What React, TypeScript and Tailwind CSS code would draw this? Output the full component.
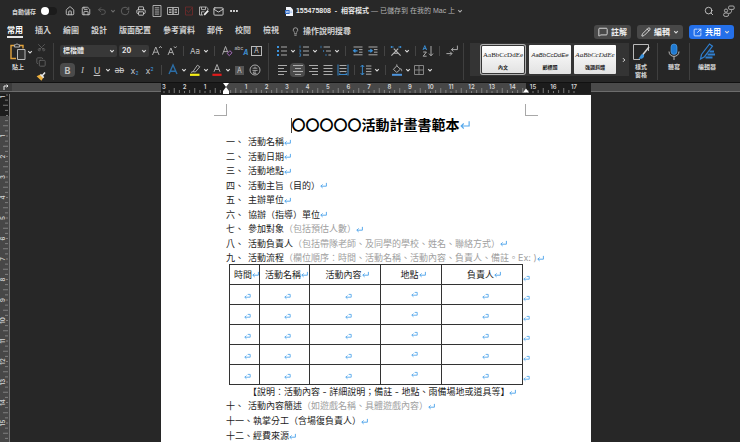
import React from 'react';
import clsx from 'clsx';
import {
  Copy,
  Ellipsis,
  Home,
  Lightbulb,
  Mail,
  MessageSquare,
  Pencil,
  Printer,
  RotateCw,
  Save,
  Scissors,
  Search,
  SquareArrowOutUpRight,
  Undo2,
} from 'lucide-react';

const UNIT = 20.5;

const tabs = ['常用', '插入', '繪圖', '設計', '版面配置', '參考資料', '郵件', '校閱', '檢視'];

interface OutlineItem {
  no: string;
  text: string;
  hint?: string;
}

const outlineTop: OutlineItem[] = [
  { no: '一、', text: '活動名稱' },
  { no: '二、', text: '活動日期' },
  { no: '三、', text: '活動地點' },
  { no: '四、', text: '活動主旨（目的）' },
  { no: '五、', text: '主辦單位' },
  { no: '六、', text: '協辦（指導）單位' },
  { no: '七、', text: '參加對象', hint: '（包括預估人數）' },
  { no: '八、', text: '活動負責人', hint: '（包括帶隊老師、及同學的學校、姓名、聯絡方式）' },
  { no: '九、', text: '活動流程', hint: '（欄位順序：時間、活動名稱、活動內容、負責人、備註。Ex: )' },
];

const outlineBottom: OutlineItem[] = [
  { no: '十、', text: '活動內容簡述', hint: '（如遊戲名稱、具體遊戲內容）' },
  { no: '十一、', text: '執掌分工（含場復負責人）' },
  { no: '十二、', text: '經費來源' },
];

const columns = [
  { label: '時間', width: 'w-[28px]' },
  { label: '活動名稱', width: 'w-[50px]' },
  { label: '活動內容', width: 'w-[71px]' },
  { label: '地點', width: 'w-[61px]' },
  { label: '負責人', width: 'w-[81px]' },
];

const styles = [
  {
    name: '內文',
    card: 'mx-[2px] h-[27px] w-[42px] pt-[5px] pb-[2px] ring-1 ring-[#b0b0b0] ring-offset-1 ring-offset-[#343434]',
    sample: "font-['Liberation_Serif',serif] text-[7px]",
  },
  {
    name: '副標題',
    card: 'h-[29px] w-[42px] pt-[6px] pb-[3px]',
    sample: "font-['Liberation_Sans',sans-serif] text-[6px] italic",
  },
  {
    name: '強調斜體',
    card: 'h-[29px] w-[42px] pt-[6px] pb-[3px]',
    sample: "font-['Liberation_Serif',serif] text-[7px] italic",
  },
];

/* ---------- small parts ---------- */

const Chevron = ({ className = 'text-[#d8d8d8]' }: { className?: string }) => (
  <svg viewBox="0 0 6 6" className={clsx('h-[6px] w-[6px] shrink-0', className)} aria-hidden="true">
    <path d="M1.2 2.2 3 4l1.8-1.8" fill="none" stroke="currentColor" strokeWidth="1.1" />
  </svg>
);

const Glyph = ({ children }: { children: React.ReactNode }) => (
  <svg
    viewBox="0 0 14 14"
    className="h-[14px] w-[14px] shrink-0"
    fill="none"
    stroke="#b9b9b9"
    strokeWidth="0.9"
    aria-hidden="true"
  >
    {children}
  </svg>
);

interface ToolProps {
  label: string;
  children: React.ReactNode;
  split?: boolean;
  active?: boolean;
  className?: string;
}

const Tool: React.FC<ToolProps> = ({ label, children, split, active, className }) => (
  <button
    type="button"
    aria-label={label}
    className={clsx(
      'flex h-[14px] shrink-0 items-center justify-center',
      split ? 'w-[22px]' : 'w-[15px]',
      active && 'rounded-sm bg-[#4b4b4b]',
      className,
    )}
  >
    <span className="flex w-[14px] shrink-0 justify-center">{children}</span>
    {split && (
      <span className="flex w-[8px] justify-center">
        <Chevron />
      </span>
    )}
  </button>
);

const Sep = () => <span className="mx-1 h-[10px] w-px shrink-0 bg-[#444444]" />;

const GroupSep = ({ className }: { className: string }) => (
  <span className={clsx('h-[37px] w-px shrink-0 self-start bg-[#3f3f3f]', className)} />
);

const Mark = ({ big }: { big?: boolean }) => (
  <svg
    viewBox="0 0 8 8"
    className={clsx('inline-block shrink-0', big ? 'h-[10px] w-[10px]' : 'h-[7px] w-[7px]')}
    fill="none"
    stroke="#55a8ec"
    strokeWidth={big ? 0.9 : 1.1}
    aria-hidden="true"
  >
    <path d="M7.3 1v3.8H1M3 2.8l-2.1 2 2.1 2" />
  </svg>
);

const CellMark = () => (
  <svg
    viewBox="0 0 8 8"
    className="inline-block h-[7px] w-[7px] shrink-0"
    fill="none"
    stroke="#55a8ec"
    strokeWidth="1"
    aria-hidden="true"
  >
    <path d="M4.2 1.6h2.9v3.2H1M2.8 3 .9 4.8l1.9 1.8" />
  </svg>
);

/* ---------- title bar ---------- */

const TitleBar = () => (
  <header className="flex h-[22px] items-center bg-[#282828] text-[#d4d4d4]">
    <div className="flex flex-1 items-center pl-3">
      <label className="flex items-center gap-[5px] text-[6px] font-bold whitespace-nowrap">
        自動儲存
        <input type="checkbox" role="switch" className="peer sr-only" />
        <span className="flex h-[8px] w-[16px] items-center rounded-full bg-[#1b1b1b] peer-checked:justify-end">
          <span className="h-[8px] w-[8px] rounded-full bg-white" />
        </span>
      </label>
      <div className="ml-[5px] flex items-center">
        <Tool label="首頁" className="w-[16px]"><Home size={10} strokeWidth={2} /></Tool>
        <Tool label="儲存" className="w-[16px]"><Save size={10} strokeWidth={2} /></Tool>
        <Tool label="復原" className="w-[14px] text-[#636363]"><Undo2 size={10} strokeWidth={2} /></Tool>
        <span className="flex w-[8px] justify-center"><Chevron className="text-[#6b6b6b]" /></span>
        <Tool label="重複" className="w-[16px] text-[#6a6a6a]"><RotateCw size={10} strokeWidth={2} /></Tool>
        <Tool label="列印" className="w-[16px]"><Printer size={10} strokeWidth={2} /></Tool>
        <Tool label="整頁模式" className="w-[16px]">
          <Glyph>
            <path d="M3 1.5h8v11H3z" />
            <path d="M4.8 3.8h4.4M4.8 5.9h4.4M4.8 8h4.4M4.8 10.1h4.4" />
          </Glyph>
        </Tool>
        <Tool label="閱讀模式" className="w-[16px]">
          <Glyph>
            <path d="M1.5 3.5h5.5v7H1.5zM7 3.5h5.5v7H7zM3 5.5h2.5M3 7h2.5M3 8.5h2.5M8.5 5.5H11M8.5 7H11M8.5 8.5H11" />
          </Glyph>
        </Tool>
        <Tool label="關閉檔案">
          <Glyph>
            <path d="M3.5 3h7v8h-7zM4.5 6l2 2.5L10 4" stroke="#6b2a2a" />
          </Glyph>
        </Tool>
        <Tool label="另存新檔">
          <Glyph>
            <path d="M6 11H2.5V3h6.8L11 4.6V6M4.5 3v2.6h4V3M4.5 11V7.8h3" />
            <path d="m7.2 10.8 4-4.2" stroke="#f0f0f0" strokeWidth="1.8" />
          </Glyph>
        </Tool>
        <Tool label="郵寄"><Mail size={11} strokeWidth={2} /></Tool>
        <Tool label="更多" className="text-white"><Ellipsis size={10} strokeWidth={3} /></Tool>
      </div>
    </div>

    <button
      type="button"
      className="flex items-center gap-[2px] font-['Liberation_Sans','Noto_Sans_CJK_TC',sans-serif] text-[7px] leading-[10px] whitespace-nowrap"
    >
      <svg viewBox="0 0 8 9" className="h-[9px] w-[8px]" aria-hidden="true">
        <path d="M1 0h4.6L8 2.4V9H1z" fill="#f3f6fb" />
        <path d="M0 3h4.6v4H0z" fill="#2b67c4" />
        <path d="m.9 4 .6 2 .7-2 .8 2 .6-2" fill="none" stroke="#fff" strokeWidth=".5" />
        <path d="M5.2 4.2h2M5.2 5.6h2" stroke="#7da5e2" strokeWidth=".6" />
      </svg>
      <span className="pl-px font-bold text-[#e8e8e8]">155475808&nbsp; -&nbsp; 相容模式</span>
      <span className="text-[#b4b4b4]">— 已儲存到 在我的 Mac 上</span>
      <Chevron className="text-[#a8a8a8]" />
    </button>

    <div className="flex flex-1 items-center justify-end gap-[5px] pr-1">
      <Tool label="搜尋"><Search size={10} strokeWidth={2} /></Tool>
      <Tool label="共同作業">
        <Glyph>
          <circle cx="4" cy="6.6" r="1.6" />
          <rect x="1.6" y="9" width="5" height="3.4" rx="1.6" />
          <rect x="6.6" y="2" width="5.6" height="3.4" rx="1.2" />
          <path d="M6.6 9.4c2.4 0 3-1 3-3.2" />
        </Glyph>
      </Tool>
    </div>
  </header>
);

/* ---------- tabs ---------- */

const TabRow = () => (
  <nav className="flex h-[18px] items-center justify-between bg-[#282828] pr-[6px] pl-[7px] text-[8px] leading-[10px] font-bold text-[#d0d0d0]">
    <div className="flex gap-3 whitespace-nowrap">
      {tabs.map((tab, i) => (
        <button
          key={tab}
          type="button"
          className={clsx('border-b-2 py-px', i === 0 ? 'border-[#e6e6e6] text-white' : 'border-transparent')}
        >
          {tab}
        </button>
      ))}
      <button type="button" className="flex items-center gap-[3px]">
        <Lightbulb size={9} strokeWidth={1.8} />
        操作說明搜尋
      </button>
    </div>
    <div className="flex gap-[6px] pt-[2px] whitespace-nowrap text-[#f0f0f0]">
      <button type="button" className="flex h-[14px] items-center gap-[3px] rounded-[3px] bg-[#484848] px-1">
        <MessageSquare size={10} strokeWidth={2} />
        註解
      </button>
      <button type="button" className="flex h-[14px] items-center gap-[3px] rounded-[3px] bg-[#484848] px-1">
        <Pencil size={10} strokeWidth={2} />
        編輯
        <Chevron />
      </button>
      <button type="button" className="flex h-[14px] items-center gap-[3px] rounded-[3px] bg-[#2470ea] px-1 text-white">
        <SquareArrowOutUpRight size={9} strokeWidth={2} />
        共用
        <Chevron />
      </button>
    </div>
  </nav>
);

/* ---------- ribbon ---------- */

const Lines = ({ x, w }: { x: number[]; w: number[] }) => (
  <Glyph>
    {x.map((left, i) => (
      <path key={i} d={`M${left} ${2.5 + i * 3}h${w[i]}`} />
    ))}
  </Glyph>
);

const FontGroup = () => (
  <div className="flex shrink-0 flex-col gap-[5px] text-[#c4c4c4]">
    <div className="flex items-center">
      <span className="relative mr-[2px] flex w-[57px] items-center">
        <select
          aria-label="字型"
          className="h-[12px] w-full appearance-none rounded-[2px] bg-[#383838] pl-[3px] text-[7px] leading-[10px] font-bold text-[#e4e4e4]"
        >
          <option>標楷體</option>
        </select>
        <span className="pointer-events-none absolute right-[2px]"><Chevron /></span>
      </span>
      <span className="relative flex w-[30px] items-center">
        <select
          aria-label="字型大小"
          className="h-[12px] w-full appearance-none rounded-[2px] bg-[#383838] pl-[3px] text-[7px] leading-[10px] font-bold text-[#e4e4e4]"
        >
          <option>20</option>
        </select>
        <span className="pointer-events-none absolute right-[2px]"><Chevron /></span>
      </span>
      <Tool label="放大字型">
        <Glyph><path d="m2.5 11 3.3-8 3.3 8M3.7 8.2h4.2M9 4l1.4-1.6L11.8 4" /></Glyph>
      </Tool>
      <Tool label="縮小字型">
        <Glyph><path d="m3 11 2.9-7 2.9 7M4 8.6h3.8M9 2.4 10.3 4l1.3-1.6" /></Glyph>
      </Tool>
      <Sep />
      <Tool label="變更大小寫" split><span className="text-[8px] leading-[10px]">Aa</span></Tool>
      <Sep />
      <Tool label="清除格式">
        <Glyph>
          <path d="m2.5 10.5 3-8 2.2 5.6M3.5 7.6h3.8" />
          <path d="m7.2 9.5 2.6-2.8 2.2 2-2.7 2.9z" stroke="#b673cf" />
        </Glyph>
      </Tool>
      <Tool label="注音標示">
        <span className="flex h-[11px] justify-between">
          <span className="text-[5px] leading-[5px]">abc</span>
          <span className="self-end text-[7px] leading-[8px] font-bold text-[#3f8ccc] italic">A</span>
        </span>
      </Tool>
      <Tool label="字元框線">
        <span className="border border-[#b9b9b9] px-[2px] text-[7px] leading-[8px]">A</span>
      </Tool>
    </div>
    <div className="flex items-center text-[9px] leading-[11px]">
      <Tool label="粗體" active className="w-[14px]"><b>B</b></Tool>
      <Tool label="斜體"><i className="font-['Liberation_Serif',serif]">I</i></Tool>
      <Tool label="底線" split><span className="underline">U</span></Tool>
      <Tool label="刪除線"><span className="text-[8px] line-through">ab</span></Tool>
      <Tool label="下標">
        <span>x<sub className="text-[5px] text-[#3f9be0]">2</sub></span>
      </Tool>
      <Tool label="上標">
        <span>x<sup className="text-[5px] text-[#3f9be0]">2</sup></span>
      </Tool>
      <Sep />
      <Tool label="文字效果" split>
        <Glyph><path d="m3 11 4-9 4 9M4.6 8.2h4.8" stroke="#2c6da5" strokeWidth="1.4" /></Glyph>
      </Tool>
      <Tool label="醒目提示" split>
        <Glyph>
          <path d="m5 8.6 4.4-6.4 2.4 1.6L7.4 9zM5 8.6 3 9.4" />
          <path d="M2 11.8h9.5" stroke="#f5ee17" strokeWidth="2.2" />
        </Glyph>
      </Tool>
      <Tool label="字型色彩" split>
        <Glyph>
          <path d="m4 8.8 3-7.3 3 7.3M5 6.4h4" />
          <path d="M2.4 11.8h9.2" stroke="#e01b1b" strokeWidth="2.2" />
        </Glyph>
      </Tool>
      <Tool label="字元網底"><span className="bg-[#555555] px-[2px] text-[7px] leading-[9px]">A</span></Tool>
      <Tool label="圍繞字元">
        <Glyph>
          <circle cx="7" cy="7" r="5" />
          <path d="M4.6 5.2h4.8M7 3.6v1.6M4.4 7.4h5.2M7 7.4v3M5.4 8.6v1.8h3" strokeWidth="0.8" />
        </Glyph>
      </Tool>
    </div>
  </div>
);

const ParagraphGroup = () => (
  <div className="flex shrink-0 flex-col gap-[5px]">
    <div className="flex items-center">
      <Tool label="項目符號" split>
        <Glyph>
          <path d="M6 3h6M6 7h6M6 11h6" />
          <path d="M2 3h2M2 7h2M2 11h2" stroke="#3b93dd" strokeWidth="2" />
        </Glyph>
      </Tool>
      <Tool label="編號" split>
        <Glyph>
          <path d="M6 3h6M6 7h6M6 11h6" />
          <path d="M3 1.6v2.6M2.2 6h1.4v2H2.2M2.2 9.8h1.4v2.4H2.2" stroke="#3479b3" />
        </Glyph>
      </Tool>
      <Tool label="多層次清單" split>
        <Glyph>
          <path d="M4.6 3H11M7 7h5M9.4 11H12" />
          <path d="M2 1.8v2.4M4.6 6v2M7 10v2" stroke="#3479b3" />
        </Glyph>
      </Tool>
      <Sep />
      <Tool label="減少縮排">
        <Glyph>
          <path d="M2.5 3h9M8 5.6h3.5M8 8.2h3.5M2.5 10.8h9" />
          <path d="M6.5 6.8h-4M4.4 5.2 2.6 6.8l1.8 1.6" stroke="#3b93dd" strokeWidth="1.2" />
        </Glyph>
      </Tool>
      <Tool label="增加縮排">
        <Glyph>
          <path d="M2.5 3h9M8 5.6h3.5M8 8.2h3.5M2.5 10.8h9" />
          <path d="M2.2 6.8h4M4.4 5.2l1.8 1.6-1.8 1.6" stroke="#3b93dd" strokeWidth="1.2" />
        </Glyph>
      </Tool>
      <Sep />
      <Tool label="亞洲方式配置" split>
        <Glyph>
          <path d="m2.4 11.6 6.8-7M11.6 11.6l-6.8-7M4.6 9.2h4.8" strokeWidth="1.1" />
          <path d="M1.6 3h3M9.4 3h3M2.6 2v2M11.4 2v2" stroke="#3b93dd" />
        </Glyph>
      </Tool>
      <Sep />
      <Tool label="排序">
        <Glyph>
          <path d="m2 6 1.8-4.4L5.6 6M2.6 4.6H5" stroke="#3b93dd" />
          <path d="M2.2 8h3.2l-3.2 4.2h3.4M10 2v9.6M8 9.6l2 2.2 2-2.2" />
        </Glyph>
      </Tool>
      <Sep />
      <Tool label="顯示編輯標記">
        <Glyph><path d="M12.4 1.6v4H6.6M8.4 3.8 6.4 5.6l2 1.8M1.4 9.6h5.4M5 7.6l2 2-2 2" /></Glyph>
      </Tool>
    </div>
    <div className="flex items-center">
      <Tool label="靠左對齊"><Lines x={[2, 2, 2, 2]} w={[9, 6, 9, 6]} /></Tool>
      <Tool label="置中" active><Lines x={[2, 4, 2, 4]} w={[10, 6, 10, 6]} /></Tool>
      <Tool label="靠右對齊"><Lines x={[3, 6, 3, 6]} w={[9, 6, 9, 6]} /></Tool>
      <Tool label="左右對齊"><Lines x={[2.5, 2.5, 2.5, 2.5]} w={[9, 9, 9, 9]} /></Tool>
      <Tool label="分散對齊">
        <Glyph>
          <path d="M3.5 2.5h7M3.5 5.5h7M3.5 8.5h7" />
          <path d="M2 1.5v11M12 1.5v11M3 11.5h8M4.4 10l-1.6 1.5M9.6 10l1.6 1.5" stroke="#3b93dd" />
        </Glyph>
      </Tool>
      <Sep />
      <Tool label="行距" split>
        <Glyph>
          <path d="M7 3h5.4M7 5.8h5.4M7 8.6h5.4M7 11.2h5.4" />
          <path d="M3.4 2.2v9.6M1.6 4l1.8-2 1.8 2M1.6 10l1.8 2 1.8-2" stroke="#3b93dd" />
        </Glyph>
      </Tool>
      <Sep />
      <Tool label="網底" split>
        <Glyph>
          <path d="m3.4 6.4 3.4-3.6 3.6 3.4-3.6 3.2zM6.8 2.8V1.4M10.6 5.4c1 .9 1.2 1.8 1 2.8" />
          <path d="M2 11.8h10" stroke="#4d94dc" strokeWidth="2" />
        </Glyph>
      </Tool>
      <Tool label="框線" split>
        <Glyph><path d="M2.5 2.5h9v9h-9zM7 2.5v9M2.5 7h9" stroke="#8e8e8e" /></Glyph>
      </Tool>
    </div>
  </div>
);

const StyleGallery = () => (
  <div className="flex h-[33px] shrink-0 items-center gap-[3px] self-start bg-[#343434] pl-[10px]">
    {styles.map((style) => (
      <button
        key={style.name}
        type="button"
        className={clsx(
          'flex flex-col items-center justify-between rounded-[1px] bg-gradient-to-b from-white to-[#e2e2e2] text-[#222222]',
          style.card,
        )}
      >
        <span className={clsx('leading-[9px] whitespace-nowrap', style.sample)}>AaBbCcDdEe</span>
        <span className="text-[5px] leading-[7px] font-bold whitespace-nowrap">{style.name}</span>
      </button>
    ))}
    <button type="button" aria-label="更多樣式" className="flex w-[10px] justify-center">
      <svg viewBox="0 0 6 6" className="h-[6px] w-[6px]" aria-hidden="true">
        <path d="M2 1.2 3.8 3 2 4.8" fill="none" stroke="#e4e4e4" strokeWidth="1" />
      </svg>
    </button>
  </div>
);

interface LargeToolProps {
  label: React.ReactNode;
  children: React.ReactNode;
}

const LargeTool: React.FC<LargeToolProps> = ({ label, children }) => (
  <button
    type="button"
    className="flex w-6 shrink-0 flex-col items-center gap-[2px] self-start text-[6px] leading-[8px] font-bold whitespace-nowrap text-[#d8d8d8]"
  >
    <svg viewBox="0 0 18 18" className="h-[18px] w-[18px]" fill="none" stroke="#b9b9b9" aria-hidden="true">
      {children}
    </svg>
    <span>{label}</span>
  </button>
);

const Ribbon = () => (
  <section className="flex h-[42px] items-start overflow-hidden bg-[#262626] pt-[3px] pl-[6px]">
    <LargeTool label="貼上">
      <path d="M5 2.5H2v13h5M11 2.5h3v3" stroke="#e3a33c" strokeWidth="1.4" />
      <path d="M5.4 4V1.8h1.4C7 .6 9 .6 9.2 1.8h1.4V4z" />
      <path d="M8.5 6.5H16v10H8.5z" fill="#333" />
    </LargeTool>
    <span className="-ml-1 flex h-[18px] w-2 items-center justify-center"><Chevron /></span>
    <div className="flex w-[14px] shrink-0 flex-col items-center justify-between self-stretch pb-px text-[#666666]">
      <button type="button" aria-label="剪下"><Scissors size={9} strokeWidth={2} className="-rotate-90" /></button>
      <button type="button" aria-label="複製"><Copy size={10} strokeWidth={2} /></button>
      <button type="button" aria-label="複製格式" className="flex">
        <svg viewBox="0 0 10 10" className="h-[10px] w-[10px]" aria-hidden="true">
          <path d="m.6 5.2 3.6-1.6 3.2 3-2 3.2z" fill="#eeb13f" />
          <path d="m4.4 3.4 3.4 3.2M6.2 4.8 9 1.4" fill="none" stroke="#e6e6e6" strokeWidth="1.5" />
        </svg>
      </button>
    </div>
    <GroupSep className="mr-[6px] ml-[5px]" />
    <div className="pt-px"><FontGroup /></div>
    <GroupSep className="mr-[6px] ml-1" />
    <div className="pt-px"><ParagraphGroup /></div>
    <GroupSep className="mr-[6px] ml-1" />
    <StyleGallery />
    <LargeTool label={<>樣式<br />窗格</>}>
      <path d="M16.5 8V1.5h-15v15H8" />
      <path d="m17 4-6.5 8" stroke="#d5d5d5" strokeWidth="1.6" />
      <path d="M10.6 11c-2 .2-2.2 3-4.2 4.6 3 .9 5.8-.6 5.8-3.2z" fill="#3b93dd" stroke="none" />
    </LargeTool>
    <GroupSep className="mx-1" />
    <LargeTool label="聽寫">
      <rect x="6" y="1" width="6" height="10.5" rx="3" fill="#1f7ad2" stroke="#5aa7ec" strokeWidth=".6" />
      <path d="M4 8.5c0 6.5 10 6.5 10 0M9 13.5V17" />
    </LargeTool>
    <GroupSep className="mr-[5px] ml-[3px]" />
    <LargeTool label="編輯器">
      <path d="M3.5 11.5 11.5 1l3 2.2-8 10.5-4 2.3z" stroke="#2f7fd0" strokeWidth="1.2" />
      <path d="M11.5 8.5H16M9.5 11.5H17M7.5 14.5h7" stroke="#2f7fd0" strokeWidth="2" />
    </LargeTool>
  </section>
);

/* ---------- rulers ---------- */

const Ticks = ({ count, origin, vertical }: { count: number; origin: number; vertical?: boolean }) => (
  <>
    {Array.from({ length: count * 4 + 1 }, (_, i) => {
      const at = origin + (i * UNIT) / 4;
      const len = i % 4 === 2 ? 5 : i % 4 === 0 ? 2 : 3;
      return (
        <path
          key={i}
          d={vertical ? `M${8 - len} ${at}h${len}` : `M${at} ${10 - len}v${len}`}
          stroke="#8f8f8f"
          strokeWidth="0.8"
        />
      );
    })}
  </>
);

const HorizontalRuler = () => (
  <div className="flex h-[12px] shrink-0 border-t border-[#111111] bg-[#272727]">
    <div className="flex h-[9px] w-[12px] items-center justify-center border-b border-[#6c6c6c] bg-[#3c3c3c]">
      <svg viewBox="0 0 6 6" className="h-[6px] w-[6px]" aria-hidden="true">
        <path d="M1 6V2h4M3.6.6 5 2 3.6 3.4" fill="none" stroke="#e8e8e8" />
      </svg>
    </div>
    <div className="h-[9px] flex-1 border-b border-[#6c6c6c] bg-[#4a4a4a]" />
    <svg viewBox="0 0 430 11" className="h-[11px] w-[430px] shrink-0" aria-label="水平尺規">
      <path d="M0 0h430v11H0z" fill="#1c1c1c" />
      <path d="M65 0h300v10H65z" fill="#474747" />
      <Ticks count={20} origin={3} />
      <g fill="#d4d4d4" fontSize="6" fontWeight="600" textAnchor="middle">
        {[3, 2, 1].map((n) => (
          <text key={n} x={64.5 - n * UNIT} y="6">{n}</text>
        ))}
        {Array.from({ length: 17 }, (_, i) => (
          <text key={i} x={64.5 + (i + 1) * UNIT} y="6">{i + 1}</text>
        ))}
      </g>
      <path d="M62 0h6l-3 4zM62 8l3-4 3 4v3h-6zM362 9.5l3-4 3 4z" fill="#ffffff" />
    </svg>
    <div className="h-[9px] flex-1 border-b border-[#6c6c6c] bg-[#4a4a4a]" />
  </div>
);

const VerticalRuler = () => (
  <div className="w-[10px] shrink-0 overflow-hidden border-r border-[#777777] bg-[#474747]">
    <svg viewBox="0 0 9 348" className="h-[348px] w-[9px]" aria-label="垂直尺規">
      <path d="M0 0h9v22H0z" fill="#1d1d1d" />
      <Ticks count={17} origin={1} vertical />
      <g fill="#d4d4d4" fontSize="6" fontWeight="600" textAnchor="middle">
        <text transform="translate(5 3) rotate(-90)">1</text>
        {Array.from({ length: 15 }, (_, i) => (
          <text key={i} transform={`translate(5 ${21.5 + (i + 1) * UNIT}) rotate(-90)`}>{i + 1}</text>
        ))}
      </g>
    </svg>
  </div>
);

/* ---------- document ---------- */

const Outline = ({ items, className }: { items: OutlineItem[]; className?: string }) => (
  <ol className={clsx('flex flex-col justify-between', className)}>
    {items.map((item) => (
      <li key={item.no} className="flex items-center whitespace-nowrap">
        <span className="min-w-[22px]">{item.no}</span>
        <span>{item.text}</span>
        {item.hint && <span className="text-[#a0a0a0]">{item.hint}</span>}
        <Mark />
      </li>
    ))}
  </ol>
);

const ScheduleTable = () => (
  <div className="-mt-px -mr-4 pl-[3px]">
    <table className="table-fixed border-collapse">
      <thead>
        <tr className="h-5">
          {columns.map((col) => (
            <th key={col.label} className={clsx('border border-[#333333] p-0 font-normal', col.width)}>
              <span className="flex items-center justify-center pl-1 whitespace-nowrap">
                {col.label}
                <Mark />
              </span>
            </th>
          ))}
          <td className="w-2 p-0 pt-[6px] text-center leading-[8px]"><CellMark /></td>
        </tr>
      </thead>
      <tbody>
        {[1, 2, 3, 4, 5].map((row) => (
          <tr key={row} className="h-5">
            {columns.map((col) => (
              <td
                key={col.label}
                className={clsx(
                  'border border-[#333333] p-0 pl-[6px] text-center leading-[8px]',
                  col.label === '地點' ? 'pb-[2px]' : 'pt-[2px]',
                )}
              >
                <CellMark />
              </td>
            ))}
            <td className="w-2 p-0 pt-[6px] text-center leading-[8px]"><CellMark /></td>
          </tr>
        ))}
      </tbody>
    </table>
  </div>
);

const Page = () => (
  <article className="w-[430px] bg-white px-[65px] pt-[9px] text-[9px] leading-[14px] text-[#1c1c1c]">
    <div className="-mx-3 flex h-3 justify-between">
      <span className="w-[13px] border-r border-b border-[#a8a8a8]" />
      <span className="w-[13px] border-b border-l border-[#a8a8a8]" />
    </div>
    <h1 className="flex items-center justify-center pb-px pl-2 text-[14px] leading-[18px] font-bold whitespace-nowrap text-black">
      <span className="h-[15px] w-px bg-[#444444]" />
      〇〇〇〇〇活動計畫書範本
      <Mark big />
    </h1>
    <Outline items={outlineTop} className="min-h-[130px]" />
    <ScheduleTable />
    <p className="flex items-center pl-[22px] whitespace-nowrap">
      【說明：活動內容 - 詳細說明；備註 - 地點、雨備場地或道具等】
      <Mark />
    </p>
    <Outline items={outlineBottom} className="min-h-[44px]" />
  </article>
);

const App: React.FC = () => (
  <div className="flex h-screen flex-col overflow-hidden bg-[#272727] font-['Inter','Noto_Sans_CJK_TC',sans-serif]">
    <TitleBar />
    <TabRow />
    <Ribbon />
    <HorizontalRuler />
    <main className="flex min-h-0 flex-1 overflow-hidden">
      <VerticalRuler />
      <div className="flex flex-1 items-stretch justify-center pt-px pl-[2px]">
        <Page />
      </div>
    </main>
  </div>
);

export default App;
